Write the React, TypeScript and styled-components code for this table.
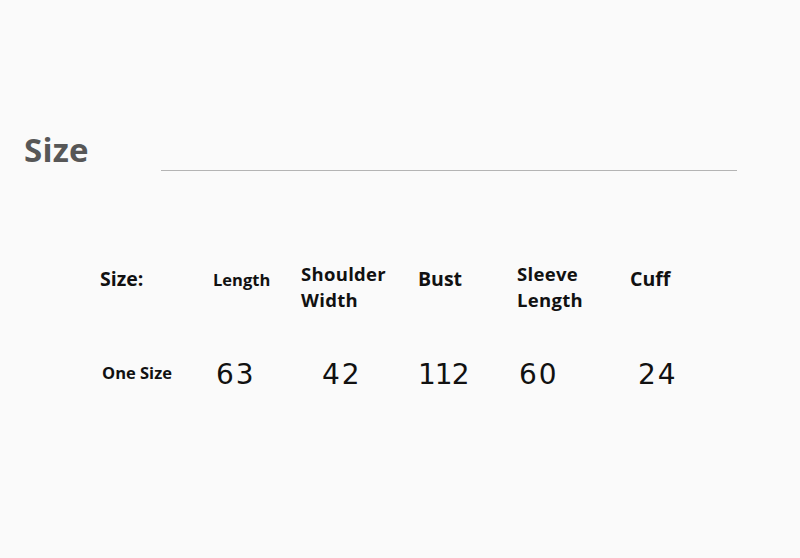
import { createGlobalStyle } from "styled-components";
import styled from "styled-components";

const GlobalStyle = createGlobalStyle`
  body {
    margin: 0;
    background: #fafafa;
    font-family: "Open Sans", "Liberation Sans", sans-serif;
  }
`;

const Page = styled.div`
  width: 800px;
  height: 558px;
  padding-top: 130px;
  box-sizing: border-box;
`;

const TitleRow = styled.div`
  display: flex;
  align-items: flex-start;
  padding-left: 24px;
`;

const Title = styled.h1`
  margin: 0;
  font-size: 33px;
  line-height: 40px;
  font-weight: 700;
  color: #575757;
  letter-spacing: 0.2px;
`;

const Rule = styled.div`
  margin-left: 72px;
  margin-top: 40px;
  width: 576px;
  height: 1px;
  background: #b4b4b4;
`;

const Table = styled.div`
  display: grid;
  grid-template-columns: 113px 88px 117px 99px 113px 80px;
  margin-left: 100px;
  margin-top: 92px;
  row-gap: 46px;
`;

const HeadCell = styled.div<{ $small?: boolean; $two?: boolean }>`
  font-weight: 700;
  color: #111;
  font-size: ${p => (p.$small ? "16.5px" : p.$two ? "18.5px" : "19.5px")};
  line-height: ${p => (p.$two ? "25.5px" : "24px")};
  letter-spacing: ${p => (p.$two ? "0.3px" : "0")};
  white-space: nowrap;
  margin-top: ${p => (p.$two ? "-2px" : "0")};
  padding-top: ${p => (p.$two ? "0" : p.$small ? "5px" : "4px")};
`;

const RowLabel = styled.div`
  font-weight: 700;
  font-size: 16.5px;
  line-height: 24px;
  color: #111;
  padding-top: 3px;
  padding-left: 2px;
  white-space: nowrap;
`;

const Value = styled.div<{ $indent: number; $tight?: boolean }>`
  font-family: "DejaVu Sans", sans-serif;
  font-size: 28px;
  line-height: 34px;
  letter-spacing: ${p => (p.$tight ? "-1px" : "2px")};
  color: #111;
  padding-left: ${p => p.$indent}px;
`;

const values: [string, number][] = [
  ["63", 3],
  ["42", 21],
  ["112", 0],
  ["60", 2],
  ["24", 8],
];

export default function App() {
  return (
    <Page>
      <GlobalStyle />
      <TitleRow>
        <Title>Size</Title>
        <Rule />
      </TitleRow>
      <Table>
        <HeadCell>Size:</HeadCell>
        <HeadCell $small>Length</HeadCell>
        <HeadCell $two>Shoulder<br />Width</HeadCell>
        <HeadCell>Bust</HeadCell>
        <HeadCell $two>Sleeve<br />Length</HeadCell>
        <HeadCell>Cuff</HeadCell>

        <RowLabel>One Size</RowLabel>
        {values.map(([v, indent]) => (
          <Value key={v} $indent={indent} $tight={v === "112"}>{v}</Value>
        ))}
      </Table>
    </Page>
  );
}
